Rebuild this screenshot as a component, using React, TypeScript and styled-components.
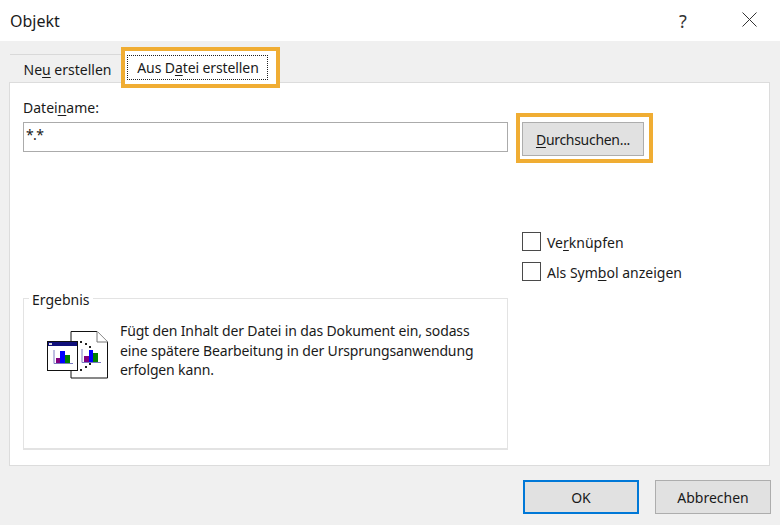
import styled, { createGlobalStyle } from 'styled-components';

const GlobalStyle = createGlobalStyle`
  html, body {
    margin: 0;
    padding: 0;
    background: #fff;
  }
  body {
    font-family: "Noto Sans", "Open Sans", sans-serif;
    font-size: 14px;
    color: #1a1a1a;
  }
  u {
    text-underline-offset: 2px;
    text-decoration-thickness: 1px;
  }
`;

const Dialog = styled.div`
  width: 780px;
  height: 525px;
  display: flex;
  flex-direction: column;
  background: #f0f0f0;
  overflow: hidden;
`;

const TitleBar = styled.div`
  height: 41px;
  flex: none;
  display: flex;
  align-items: center;
  background: #fff;
  padding-left: 10px;
`;

const Title = styled.div`
  flex: 1;
  font-size: 16px;
`;

const HelpButton = styled.div`
  width: 20px;
  margin-right: 49px;
  text-align: center;
  font-size: 18px;
  color: #333;
`;

const CloseButton = styled.div`
  width: 15px;
  height: 15px;
  margin: 0 23px 2px 0;
  display: flex;
`;

const Body = styled.div`
  flex: 1;
  display: flex;
  flex-direction: column;
  padding: 0 10px 0 9px;
`;

const TabStrip = styled.div`
  height: 42px;
  flex: none;
  display: flex;
  align-items: flex-end;
  margin-bottom: -1px;
  position: relative;
  z-index: 1;
`;

const Tab = styled.div`
  width: 112px;
  height: 29px;
  margin-left: 1px;
  box-sizing: border-box;
  border-top: 1px solid #d9d9d9;
  display: flex;
  align-items: center;
  justify-content: center;
  padding-left: 3px;
`;

const ActiveTab = styled.div`
  width: 159px;
  height: 41px;
  box-sizing: border-box;
  margin-left: -1px;
  margin-bottom: -5px;
  border: 4px solid #f0ad33;
  background: #fff;
  padding: 4px 8px 4px 2px;
  display: flex;
`;

const FocusRect = styled.div`
  flex: 1;
  border: 1px dotted #222;
  display: flex;
  align-items: center;
  justify-content: center;
  padding-left: 1px;
  letter-spacing: -0.1px;
`;

const Panel = styled.div`
  height: 384px;
  box-sizing: border-box;
  flex: none;
  background: #fff;
  border: 1px solid #dcdcdc;
  display: flex;
  gap: 8px;
  padding: 0 0 15px 13px;
`;

const LeftColumn = styled.div`
  width: 485px;
  display: flex;
  flex-direction: column;
`;

const FieldLabel = styled.div`
  margin-top: 15px;
  height: 20px;
  line-height: 20px;
`;

const FileInput = styled.div`
  margin-top: 4px;
  height: 30px;
  box-sizing: border-box;
  border: 1px solid #ababab;
  padding-left: 2px;
  line-height: 24px;
  letter-spacing: -0.6px;
  background: #fff;
`;

const ResultGroup = styled.fieldset`
  margin: auto 0 0;
  width: 485px;
  height: 163px;
  box-sizing: border-box;
  border: 2px solid #e3e3e3;
  border-width: 1px 1px 2px 1px;
  padding: 19px 10px 0 23px;
  display: flex;
  gap: 11px;
`;

const GroupLegend = styled.legend`
  margin-left: -18px;
  padding: 3px 3px 0;
  line-height: 20px;
`;

const ResultText = styled.div`
  width: 358px;
  line-height: 19.5px;
  margin-top: -8px;
  letter-spacing: -0.14px;
`;

const ObjectIcon = styled.svg`
  width: 62px;
  height: 48px;
  flex: none;
  margin-top: 2px;
`;

const RightColumn = styled.div`
  display: flex;
  flex-direction: column;
  align-items: flex-start;
`;

const BrowseFrame = styled.div`
  margin-top: 30px;
  width: 137px;
  height: 50px;
  box-sizing: border-box;
  border: 4px solid #f0ad33;
  padding: 5px 5px 3px 2px;
  display: flex;
`;

const DialogButton = styled.div<{ $primary?: boolean }>`
  box-sizing: border-box;
  display: flex;
  align-items: center;
  justify-content: center;
  background: #e1e1e1;
  border: ${(p) => (p.$primary ? '2px solid #0078d7' : '1px solid #adadad')};
`;

const BrowseButton = styled(DialogButton)`
  flex: 1;
  letter-spacing: -0.3px;
`;

const CheckRow = styled.div<{ $first?: boolean }>`
  margin-top: ${(p) => (p.$first ? '69px' : '11px')};
  margin-left: 6px;
  height: 19px;
  display: flex;
  align-items: center;
  gap: 6px;
`;

const CheckBox = styled.div`
  width: 19px;
  height: 19px;
  box-sizing: border-box;
  border: 1px solid #4a4a4a;
  background: #fff;
`;

const CheckLabel = styled.span`
  padding-top: 2px;
`;

const Footer = styled.div`
  flex: 1;
  display: flex;
  justify-content: flex-end;
  gap: 16px;
  padding-top: 14px;
  margin-right: -1px;
`;

const FooterButton = styled(DialogButton)`
  width: 116px;
  height: 34px;
`;

const App = () => (
  <Dialog>
    <GlobalStyle />
    <TitleBar>
      <Title>Objekt</Title>
      <HelpButton>?</HelpButton>
      <CloseButton>
        <svg width="15" height="15" viewBox="0 0 15 15">
          <path d="M.5.5l14 14M14.500.5l-14 14" stroke="#333" fill="none" />
        </svg>
      </CloseButton>
    </TitleBar>
    <Body>
      <TabStrip>
        <Tab>
          <span>
            Ne<u>u</u> erstellen
          </span>
        </Tab>
        <ActiveTab>
          <FocusRect>
            <span>
              Aus D<u>a</u>tei erstellen
            </span>
          </FocusRect>
        </ActiveTab>
      </TabStrip>
      <Panel>
        <LeftColumn>
          <FieldLabel>
            Datei<u>n</u>ame:
          </FieldLabel>
          <FileInput>*.*</FileInput>
          <ResultGroup>
            <GroupLegend>Ergebnis</GroupLegend>
            <ObjectIcon viewBox="0 0 62 48">
              <path d="M24 .5H50L60.500 11V47H24z" fill="#fff" stroke="#111" strokeWidth="1" />
              <path d="M50 .5V11H60.500" fill="#fff" stroke="#777" strokeWidth="1" />
              <rect x="0.500" y="10.500" width="30" height="29" fill="#fff" stroke="#111" strokeWidth="1" />
              <rect x="1" y="11" width="29" height="4" fill="#10107a" />
              <rect x="2" y="12" width="3" height="2" fill="#d8d8d8" />
              <path d="M7 19v13.500h19" stroke="#7a7ac0" fill="none" />
              <rect x="9" y="27" width="4" height="5" fill="#800080" />
              <rect x="13" y="20" width="5" height="12" fill="#0000ff" />
              <rect x="18" y="24" width="5" height="8" fill="#008000" />
              <path d="M35 18v13.500h19" stroke="#7a7ac0" fill="none" />
              <rect x="37" y="25" width="5" height="6" fill="#800080" />
              <rect x="42" y="19" width="4" height="12" fill="#0000ff" />
              <rect x="46" y="22" width="5" height="9" fill="#008000" />
              <g fill="#222">
                <rect x="33" y="10" width="2" height="2" />
                <rect x="38" y="12" width="2" height="2" />
                <rect x="42" y="15" width="2" height="2" />
                <rect x="42" y="32" width="2" height="2" />
                <rect x="38" y="35" width="2" height="2" />
                <rect x="33" y="38" width="2" height="2" />
              </g>
            </ObjectIcon>
            <ResultText>
              Fügt den Inhalt der Datei in das Dokument ein, sodass eine spätere Bearbeitung in der
              Ursprungsanwendung erfolgen kann.
            </ResultText>
          </ResultGroup>
        </LeftColumn>
        <RightColumn>
          <BrowseFrame>
            <BrowseButton>
              <span>
                <u>D</u>urchsuchen...
              </span>
            </BrowseButton>
          </BrowseFrame>
          <CheckRow $first>
            <CheckBox />
            <CheckLabel>
              Ve<u>r</u>knüpfen
            </CheckLabel>
          </CheckRow>
          <CheckRow>
            <CheckBox />
            <CheckLabel>
              Als Sym<u>b</u>ol anzeigen
            </CheckLabel>
          </CheckRow>
        </RightColumn>
      </Panel>
      <Footer>
        <FooterButton $primary>OK</FooterButton>
        <FooterButton>Abbrechen</FooterButton>
      </Footer>
    </Body>
  </Dialog>
);

export default App;
